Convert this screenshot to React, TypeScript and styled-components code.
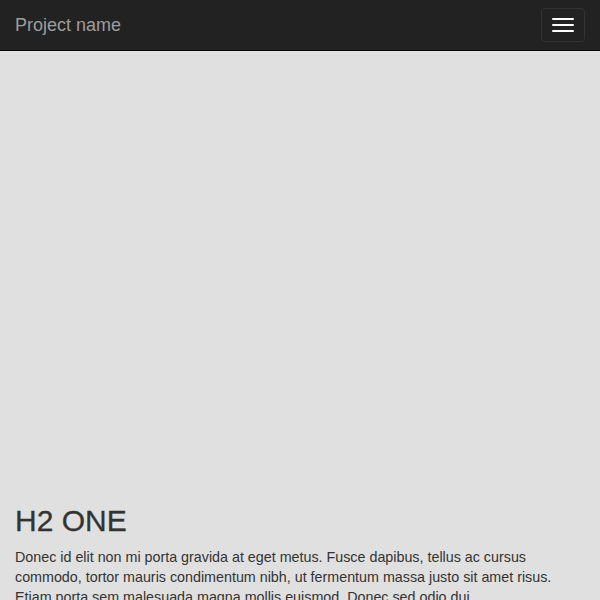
import React from 'react'
import styled, { createGlobalStyle } from 'styled-components'

const GlobalStyle = createGlobalStyle`
  html, body {
    margin: 0;
    padding: 0;
    background: #e0e0e0;
  }
  body {
    font-family: "Liberation Sans", Arial, Helvetica, sans-serif;
    font-size: 14px;
    line-height: 20px;
    color: #333;
  }
  * {
    box-sizing: border-box;
  }
`

const Navbar = styled.nav`
  height: 51px;
  background-color: #222;
  border-bottom: 1px solid #080808;
  display: flex;
  align-items: flex-start;
  justify-content: space-between;
`

const Brand = styled.a`
  display: block;
  padding: 15px 15px;
  height: 50px;
  font-size: 18px;
  line-height: 20px;
  color: #9d9d9d;
  text-decoration: none;
`

const Toggle = styled.button`
  margin: 8px 15px 0 0;
  padding: 9px 10px;
  width: 44px;
  height: 34px;
  background: transparent;
  border: 1px solid #333;
  border-radius: 4px;
  display: flex;
  flex-direction: column;
  gap: 4px;
  cursor: pointer;
`

const IconBar = styled.span`
  display: block;
  width: 22px;
  height: 2px;
  border-radius: 1px;
  background-color: #fff;
`

// empty block above the content, same colour as the page
const Hero = styled.div`
  height: 433px;
`

const Container = styled.div`
  padding: 0 15px;
`

const Heading = styled.h2`
  margin: 20px 0 10px;
  font-size: 30px;
  line-height: 33px;
  font-weight: 500;
  color: #333;
  -webkit-text-stroke: 0.3px #333;
`

const Para = styled.p`
  margin: 0 0 10px;
  font-size: 14.3px;
`

export default function App() {
  return (
    <>
      <GlobalStyle />
      <Navbar>
        <Brand href="#">Project name</Brand>
        <Toggle aria-label="Toggle navigation">
          <IconBar />
          <IconBar />
          <IconBar />
        </Toggle>
      </Navbar>
      <Hero />
      <Container>
        <Heading>H2 ONE</Heading>
        <Para>
          Donec id elit non mi porta gravida at eget metus. Fusce dapibus, tellus ac cursus commodo, tortor mauris
          condimentum nibh, ut fermentum massa justo sit amet risus. Etiam porta sem malesuada magna mollis euismod.
          Donec sed odio dui.
        </Para>
      </Container>
    </>
  )
}
